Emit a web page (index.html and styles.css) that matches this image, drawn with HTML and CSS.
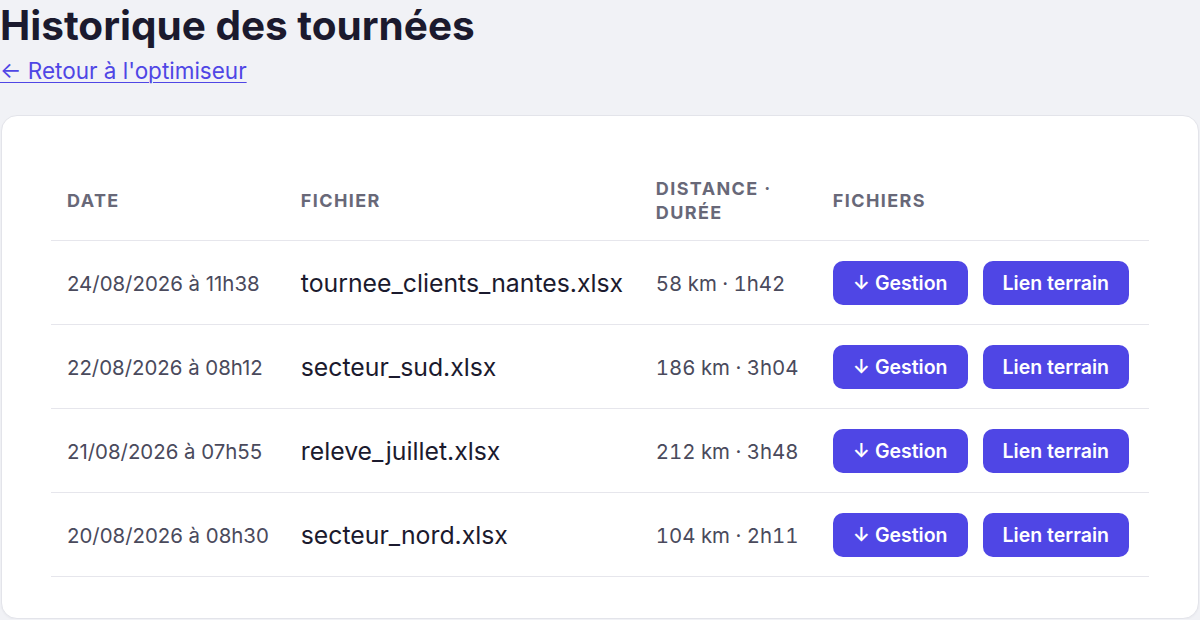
FILE: index.html
```html
<!DOCTYPE html>
<html lang="fr">
<head>
<meta charset="utf-8">
<title>Historique des tournées</title>
<link rel="stylesheet" href="styles.css">
</head>
<body>
<main class="page">
  <h1 class="title">Historique des tournées</h1>
  <a class="back" href="#">← Retour à l'optimiseur</a>
  <section class="card">
    <table class="history">
      <colgroup>
        <col class="c-date">
        <col class="c-file">
        <col class="c-dist">
        <col class="c-files">
      </colgroup>
      <thead>
        <tr>
          <th>Date</th>
          <th>Fichier</th>
          <th class="th-dist">Distance · Durée</th>
          <th>Fichiers</th>
        </tr>
      </thead>
      <tbody>
        <tr>
          <td class="date">24/08/2026 à 11h38</td>
          <td class="file">tournee_clients_nantes.xlsx</td>
          <td class="dist">58 km · 1h42</td>
          <td class="actions"><div class="btns"><a class="btn" href="#">↓ Gestion</a><a class="btn" href="#">Lien terrain</a></div></td>
        </tr>
        <tr>
          <td class="date">22/08/2026 à 08h12</td>
          <td class="file">secteur_sud.xlsx</td>
          <td class="dist">186 km · 3h04</td>
          <td class="actions"><div class="btns"><a class="btn" href="#">↓ Gestion</a><a class="btn" href="#">Lien terrain</a></div></td>
        </tr>
        <tr>
          <td class="date">21/08/2026 à 07h55</td>
          <td class="file">releve_juillet.xlsx</td>
          <td class="dist">212 km · 3h48</td>
          <td class="actions"><div class="btns"><a class="btn" href="#">↓ Gestion</a><a class="btn" href="#">Lien terrain</a></div></td>
        </tr>
        <tr>
          <td class="date">20/08/2026 à 08h30</td>
          <td class="file">secteur_nord.xlsx</td>
          <td class="dist">104 km · 2h11</td>
          <td class="actions"><div class="btns"><a class="btn" href="#">↓ Gestion</a><a class="btn" href="#">Lien terrain</a></div></td>
        </tr>
      </tbody>
    </table>
  </section>
</main>
</body>
</html>
```
FILE: styles.css
```css
* { box-sizing: border-box; }

html, body {
  margin: 0;
  padding: 0;
  background: #f1f2f6;
  font-family: Inter, "Liberation Sans", sans-serif;
  color: #1b1a2e;
}

.page {
  padding: 0 1px 0 0;
}

.title {
  margin: 0;
  padding-top: 2px;
  font-size: 40.5px;
  line-height: 48px;
  font-weight: 700;
  color: #1b1a2e;
}

.back {
  display: inline-block;
  margin-top: 7px;
  font-size: 22.5px;
  line-height: 28px;
  color: #4f46e5;
  text-decoration: underline;
  text-underline-offset: 3px;
  text-decoration-thickness: 1px;
}

.card {
  margin: 30px 0 0 1px;
  background: #ffffff;
  border: 1px solid #e3e4ea;
  border-radius: 16px;
  padding: 40px 49px 41px 49px;
  box-shadow: 0 1px 2px rgba(20, 20, 40, 0.04);
}

.history {
  width: 100%;
  border-collapse: collapse;
}

.c-date { width: 233px; }
.c-file { width: 355px; }
.c-dist { width: 177px; }
.c-files { width: auto; }

.history th {
  text-align: left;
  padding: 21px 16px 15px 16px;
  font-size: 18px;
  line-height: 24px;
  font-weight: 700;
  letter-spacing: 1.4px;
  text-transform: uppercase;
  color: #686878;
  border-bottom: 1px solid #e6e6ec;
  vertical-align: middle;
}

.history td {
  padding: 20px 16px 19px 16px;
  border-bottom: 1px solid #e6e6ec;
  vertical-align: middle;
  white-space: nowrap;
}

.date {
  font-size: 20.4px;
  color: #4a4a5c;
}

.dist {
  font-size: 20.4px;
  font-variant-numeric: tabular-nums;
  color: #4a4a5c;
}

.file {
  font-size: 24.8px;
  color: #1b1a2e;
}

.btns {
  display: flex;
  gap: 15px;
}

.btn {
  display: inline-flex;
  align-items: center;
  height: 44px;
  padding: 0 20px;
  border-radius: 10px;
  background: #4f46e5;
  color: #ffffff;
  font-size: 19.5px;
  font-weight: 600;
  text-decoration: none;
}
```
